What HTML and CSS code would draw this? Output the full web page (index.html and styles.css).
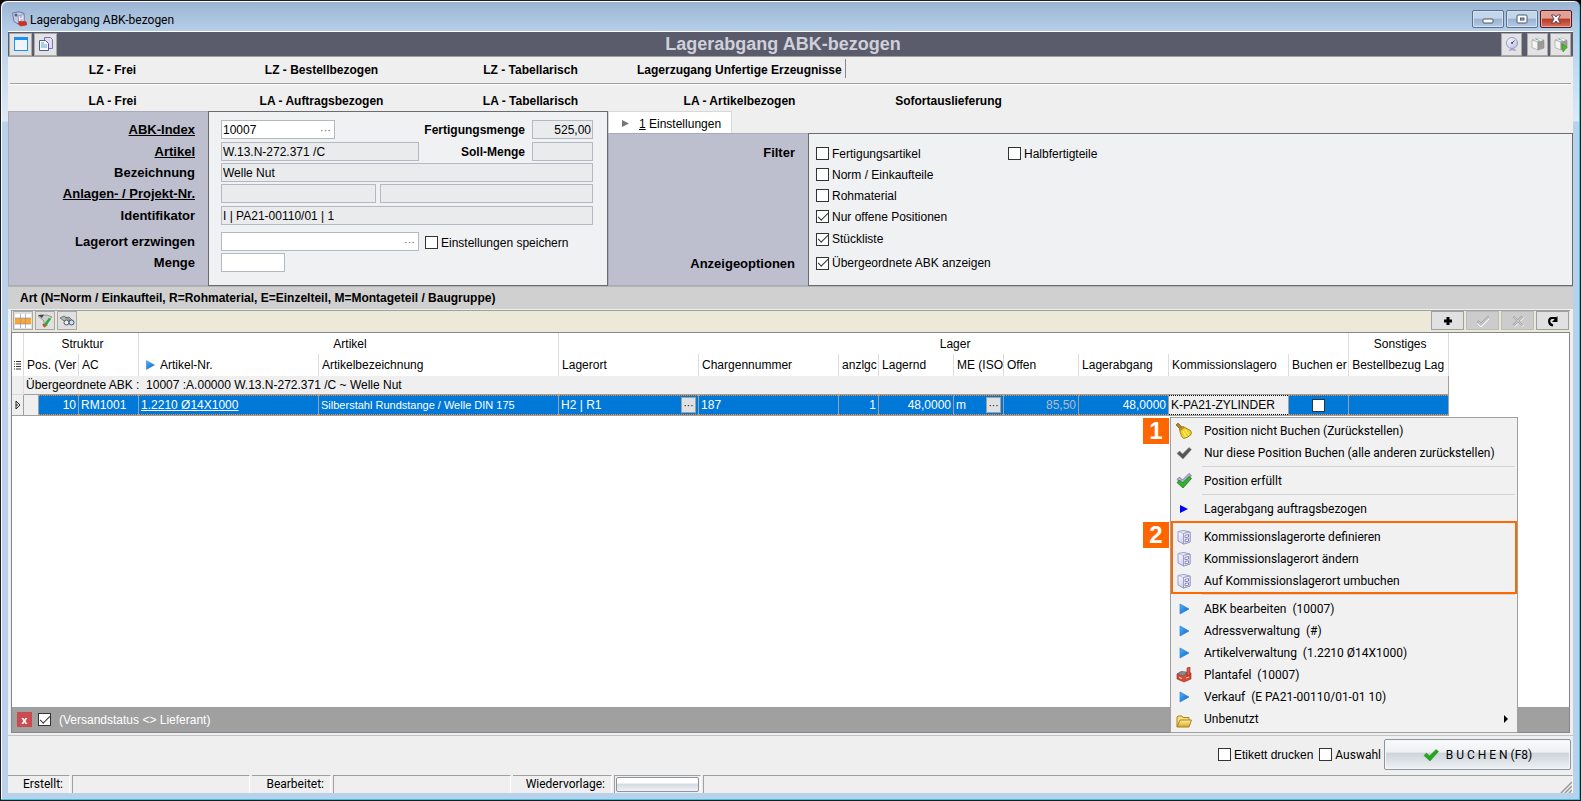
FILE: index.html
```html
<!DOCTYPE html>
<html lang="de">
<head>
<meta charset="utf-8">
<title>Lagerabgang ABK-bezogen</title>
<link rel="stylesheet" href="styles.css">
</head>
<body>
<svg class="defs" aria-hidden="true">
  <defs>
    <linearGradient id="gBlue" x1="0" y1="0" x2="1" y2="1"><stop offset="0" stop-color="#4db4ff"/><stop offset="1" stop-color="#0060d0"/></linearGradient>
    <linearGradient id="gGold" x1="0" y1="0" x2="0" y2="1"><stop offset="0" stop-color="#fff0a0"/><stop offset="1" stop-color="#d9a520"/></linearGradient>
    <linearGradient id="gLilac" x1="0" y1="0" x2="1" y2="1"><stop offset="0" stop-color="#ffffff"/><stop offset="1" stop-color="#b9b9e4"/></linearGradient>
    <symbol id="i-play" viewBox="0 0 16 16"><path d="M4 3l9 5-9 5z" fill="url(#gBlue)" stroke="#3a7fc4" stroke-width=".7"/></symbol>
    <symbol id="i-cabinet" viewBox="0 0 16 16"><path d="M2 2.500l6-1 6 1.500v10l-6.500 2-5.500-3z" fill="url(#gLilac)" stroke="#9a9acc" stroke-linejoin="round"/><path d="M2 2.500l5.500 2L14 3" fill="none" stroke="#b4b4dc" stroke-width=".8"/><path d="M7.500 4.500L14 3v10l-6.500 2z" fill="#f6f6ff" stroke="#8c8cc4" stroke-width=".8"/><path d="M9 6.300l3.500-.8v2.500L9 8.800zM9 10.500l3.500-.8v2.500L9 13z" fill="#fff" stroke="#7676b4" stroke-width=".9"/></symbol>
    <symbol id="i-check" viewBox="0 0 16 16"><path d="M1 8.500L3.500 6l3 3L13 2.500 15.500 4.500 7 14z" stroke-linejoin="round"/></symbol>
    <symbol id="i-cube" viewBox="0 0 16 16"><path d="M2 4l6-2 6 2-5 2z" fill="#fff" stroke="#aaa" stroke-width=".6"/><path d="M2 4l6 2v8l-6-2.500z" fill="#f4f4f0" stroke="#999" stroke-width=".6"/><path d="M8 6l6-1.500V12l-6 2z" fill="#9c9c98" stroke="#888" stroke-width=".6"/><path d="M5.500 3l4 1.500" stroke="#5ab0a0"/></symbol>
  </defs>
</svg>
<div class="window">
  <header class="titlebar">
    <svg class="ico16" viewBox="0 0 16 16"><path d="M1.500 2L8 .8l5 1.500V10l-5 3.500-5-3z" fill="#c5c9e4" stroke="#7078a8"/><path d="M7 5l6-1.500V11l-5 2z" fill="#eef" stroke="#7078a8" stroke-width=".7"/><circle cx="5" cy="4" r="1.500" fill="#555a88"/><path d="M9 6h2M9.500 9h2" stroke="#7078a8"/><path d="M8 10.500h6.500l1 1v2.500l-6 1L7.500 13z" fill="#d83018" stroke="#a01808" stroke-width=".5"/></svg>
    <h1>Lagerabgang ABK-bezogen</h1>
    <div class="caption">
      <button aria-label="Minimieren"><svg viewBox="0 0 14 12"><rect x="2" y="6" width="10" height="4" rx="1" fill="#fff" stroke="#4d586c"/></svg></button>
      <button aria-label="Maximieren"><svg viewBox="0 0 14 12"><rect x="2" y="2" width="10" height="8" rx="1" fill="#fff" stroke="#4d586c"/><rect x="5.500" y="5" width="3.500" height="2" fill="#a8c0dc" stroke="#4d586c"/></svg></button>
      <button class="close" aria-label="Schließen"><svg viewBox="0 0 14 12"><path d="M2.500 2h3L7 4l1.500-2h3L9 6l2.500 4h-3L7 8l-1.500 2h-3L5 6z" fill="#fff" stroke="#5c3440" stroke-width=".9"/></svg></button>
    </div>
  </header>

  <main class="client">
    <div class="toolbar">
      <button class="tool" aria-label="Fenster"><svg viewBox="0 0 16 16"><rect x="1.500" y="1.500" width="13" height="13" fill="#f0f2fc" stroke="#1c90f0"/><path d="M1 3h14" stroke="#1c90f0" stroke-width="2"/></svg></button>
      <button class="tool" aria-label="Kopieren"><svg viewBox="0 0 16 16"><path d="M6.500 1.500h6l2 2v9h-8z" fill="#e4dcf4" stroke="#8070b0"/><path d="M1.500 4.500h6l3 3v7h-9z" fill="#f4f8ff" stroke="#4c5c94"/><path d="M3 9h6M3 11h6M3 7h3" stroke="#6ca0c8"/></svg></button>
      <h2>Lagerabgang ABK-bezogen</h2>
      <button class="tool slim apart" aria-label="Suche"><svg viewBox="0 0 16 16"><circle cx="8" cy="7" r="5.500" fill="url(#gLilac)" stroke="#9898cc"/><path d="M8 7l2.500-2.500" stroke="#556"/><circle cx="8" cy="7" r="1" fill="#445"/><path d="M5 14.500q3.500-3 7 0" fill="#b8b8e0" stroke="#9898cc"/></svg></button>
      <button class="tool slim" aria-label="Lager"><svg><use href="#i-cube"/></svg></button>
      <button class="tool slim" aria-label="Lager buchen"><svg viewBox="0 0 16 16"><use href="#i-cube"/><path d="M9 8l5 3-4 5z" fill="#48c020" stroke="#2a8a10" stroke-width=".6"/></svg></button>
    </div>

    <nav class="tabs">
      <div class="tabrow">
        <button>LZ - Frei</button><button>LZ - Bestellbezogen</button><button>LZ - Tabellarisch</button><button class="ruled">Lagerzugang Unfertige Erzeugnisse</button>
      </div>
      <div class="tabrow second">
        <button>LA - Frei</button><button>LA - Auftragsbezogen</button><button>LA - Tabellarisch</button><button>LA - Artikelbezogen</button><button>Sofortauslieferung</button>
      </div>
    </nav>

    <div class="form">
      <div class="labels rows">
        <label class="u" for="abk">ABK-Index</label>
        <label class="u" for="art">Artikel</label>
        <label for="bez">Bezeichnung</label>
        <label class="u" for="anl">Anlagen- / Projekt-Nr.</label>
        <label for="ident">Identifikator</label>
        <label for="lag">Lagerort erzwingen</label>
        <label for="menge">Menge</label>
      </div>
      <div class="fields rows">
        <div class="line"><span class="pick w114"><input id="abk" value="10007"><button aria-label="Auswählen">···</button></span><label class="b end" for="fm">Fertigungsmenge</label><input class="num" id="fm" value="525,00" readonly></div>
        <div class="line"><input class="w198" id="art" value="W.13.N-272.371 /C" readonly><label class="b end" for="sm">Soll-Menge</label><input class="num" id="sm" readonly></div>
        <div class="line"><input class="grow" id="bez" value="Welle Nut" readonly></div>
        <div class="line tight"><input class="w155" id="anl" readonly><input class="grow" aria-label="Projekt-Nr." readonly></div>
        <div class="line"><input class="grow" id="ident" value="I | PA21-00110/01 | 1" readonly></div>
        <div class="line"><span class="pick w198"><input id="lag"><button aria-label="Auswählen">···</button></span><label class="check set"><input type="checkbox">Einstellungen speichern</label></div>
        <div class="line"><input class="w64" id="menge"></div>
      </div>
      <div class="settings">
        <button class="tab"><svg viewBox="0 0 8 8"><path d="M0 0l8 4-8 4z" fill="#777"/></svg><span><u>1</u> Einstellungen</span></button>
        <div class="options">
          <div class="labels opt"><span>Filter</span><span>Anzeigeoptionen</span></div>
          <div class="checks">
            <label class="check"><input type="checkbox">Fertigungsartikel</label>
            <label class="check"><input type="checkbox">Halbfertigteile</label>
            <label class="check wide"><input type="checkbox">Norm / Einkaufteile</label>
            <label class="check wide"><input type="checkbox">Rohmaterial</label>
            <label class="check wide"><input type="checkbox" checked>Nur offene Positionen</label>
            <label class="check wide"><input type="checkbox" checked>Stückliste</label>
            <label class="check wide"><input type="checkbox" checked>Übergeordnete ABK anzeigen</label>
          </div>
        </div>
      </div>
    </div>

    <h3 class="legend">Art (N=Norm / Einkaufteil, R=Rohmaterial, E=Einzelteil, M=Montageteil / Baugruppe)</h3>

    <section class="gridpane">
      <div class="gridbar">
        <button class="mini" aria-label="Tabelle"><svg viewBox="0 0 16 14"><path fill="#fff" d="M0 0h16v14H0z"/><path fill="#ffa726" d="M0 4h16v6H0z"/><path d="M5.500 0v14M10.500 0v14M0 4h16M0 10h16" stroke="#8f8fc8" stroke-width=".7"/></svg></button>
        <button class="mini" aria-label="Filter"><svg viewBox="0 0 16 14"><path d="M1 2l9-1 5 2-5 4v5l-3-2V7z" fill="#d0d0d0" stroke="#888" stroke-width=".8"/><path d="M1 1l6-.5L5 4z" fill="#444"/><path d="M7 12.500l6-8" stroke="#26b02c" stroke-width="2.500"/><path d="M6 10l2 3" stroke="#e04030" stroke-width="2"/></svg></button>
        <button class="mini" aria-label="Suchen"><svg viewBox="0 0 16 14"><path d="M1 4l4-2 6 4-3 3zM6 4l4-1 4 4" fill="#aeb4b8" stroke="#666" stroke-width=".8"/><circle cx="7.500" cy="8.500" r="2.500" fill="#e8f0f8" stroke="#555"/><circle cx="12.500" cy="8.500" r="2.500" fill="#cfe0f0" stroke="#456"/></svg></button>
        <span class="gap"></span>
        <button class="nav" aria-label="Neu"><svg viewBox="0 0 12 12"><path d="M6 2v8M2 6h8" stroke="#000" stroke-width="3"/></svg></button>
        <button class="nav off" aria-label="Speichern" disabled><svg viewBox="0 0 12 12"><path d="M1 8l3 3 8-8" stroke="#fff" stroke-width="2" fill="none"/><path d="M0 7l1.500-1.500L4 8l7-7 1 1.500-8 8z" fill="#c8c8c8" stroke="#999" stroke-width=".7"/></svg></button>
        <button class="nav off" aria-label="Verwerfen" disabled><svg viewBox="0 0 12 12"><path d="M2 2l9 9M11 2l-9 9" stroke="#fff" stroke-width="3"/><path d="M1.500 1.500l9 9M10.500 1.500l-9 9" stroke="#999" stroke-width="2.500"/><path d="M1.500 1.500l9 9M10.500 1.500l-9 9" stroke="#ccc" stroke-width="1.200"/></svg></button>
        <button class="nav" aria-label="Aktualisieren"><svg viewBox="0 0 12 12"><path d="M6 10.500C1 9.500 1 3 5 3h4" fill="none" stroke="#000" stroke-width="2.200"/><path d="M10.500 1v6H5z" fill="#000"/></svg></button>
      </div>
      <div class="gridbody">
        <table>
          <colgroup><col class="c12"><col class="c15"><col class="c40"><col class="c60"><col class="c180"><col class="c240"><col class="c140"><col class="c140"><col class="c40"><col class="c75"><col class="c50"><col class="c75"><col class="c90"><col class="c120"><col class="c60"><col class="c100"></colgroup>
          <thead>
            <tr class="bands"><th></th><th colspan="3">Struktur</th><th colspan="2">Artikel</th><th colspan="9">Lager</th><th>Sonstiges</th></tr>
            <tr class="cols"><th class="mark"><svg viewBox="0 0 8 10"><path d="M2 1.500h5M2 4h5M2 6.500h5M2 9h5M0 1.500h1M0 4h1M0 6.500h1M0 9h1" stroke="#333"/></svg></th><th colspan="2">Pos. (Ver</th><th>AC</th><th><svg class="sort"><use href="#i-play"/></svg>Artikel-Nr.</th><th>Artikelbezeichnung</th><th>Lagerort</th><th>Chargennummer</th><th>anzlgc</th><th>Lagernd</th><th>ME (ISO</th><th>Offen</th><th>Lagerabgang</th><th>Kommissionslagero</th><th>Buchen er</th><th>Bestellbezug Lag</th></tr>
          </thead>
          <tbody>
            <tr class="group"><td></td><td colspan="15">Übergeordnete ABK :&nbsp; 10007 :A.00000 W.13.N-272.371 /C ~ Welle Nut</td></tr>
            <tr class="sel"><td class="plain mark"><svg viewBox="0 0 8 10"><path d="M2 1l4 4-4 4z" fill="none" stroke="#222"/><path d="M2 5h2" stroke="#222"/></svg></td><td class="plain"></td><td class="r">10</td><td>RM1001</td><td><a href="#">1.2210 Ø14X1000</a></td><td class="small">Silberstahl Rundstange / Welle DIN 175</td><td><div class="cell">H2 | R1<button aria-label="Lagerort wählen">···</button></div></td><td>187</td><td class="r">1</td><td class="r">48,0000</td><td><div class="cell">m<button aria-label="Einheit wählen">···</button></div></td><td class="r dim">85,50</td><td class="r">48,0000</td><td class="focus">K-PA21-ZYLINDER</td><td class="c"><input type="checkbox" aria-label="Buchen"></td><td></td></tr>
          </tbody>
        </table>
        <div class="filterbar">
          <button class="kill" aria-label="Filter entfernen">x</button>
          <label class="check"><input type="checkbox" checked><span>(Versandstatus &lt;&gt; Lieferant)</span></label>
        </div>
      </div>
    </section>

    <div class="actions">
      <label class="check"><input type="checkbox">Etikett drucken</label>
      <label class="check ui"><input type="checkbox">Auswahl</label>
      <button class="book"><svg viewBox="0 0 16 16"><use href="#i-check" fill="#22a81c" stroke="#1c8818" stroke-width=".5"/></svg>B U C H E N (F8)</button>
    </div>

    <footer class="status">
      <span class="s62">Erstellt:</span><span class="s178"></span><span class="s80">Bearbeitet:</span><span class="s178"></span><span class="s100">Wiedervorlage:</span><span class="s88"><button aria-label="Wiedervorlage"></button></span><span class="rest"><svg viewBox="0 0 12 12"><path d="M1 12L12 1M5 12l7-7M9 12l3-3" stroke="#999" stroke-width="1.500"/></svg></span>
    </footer>
  </main>

  <div class="menu" role="menu">
    <button role="menuitem"><svg viewBox="0 0 16 16"><path d="M0 2l2-2 4 4-2 2z" fill="#b08030" stroke="#6a4a10" stroke-width=".6"/><path d="M3.500 6L7 3.500l7.500 4q1.500 2 .5 4-3 3.500-7.500 4Q5 14 3.500 6z" fill="#f0d020" stroke="#8a7000" stroke-width=".8"/><path d="M3.500 6L7 3.500l2 1-5 4z" fill="#c09020"/><path d="M7 8l3 6M9 7l4 5" stroke="#fff8a0"/></svg>Position nicht Buchen (Zurückstellen)</button>
    <button role="menuitem"><svg viewBox="0 0 16 16"><use href="#i-check" fill="#555" stroke="#888" stroke-width=".6"/></svg>Nur diese Position Buchen (alle anderen zurückstellen)</button>
    <hr>
    <button role="menuitem"><svg viewBox="0 0 16 16"><use href="#i-check" y="-2" fill="#aab4dc" stroke="#667" stroke-width=".7"/><use href="#i-check" y="1" fill="#30b428" stroke="#1a6a18" stroke-width=".7"/></svg>Position erfüllt</button>
    <hr>
    <button role="menuitem"><svg viewBox="0 0 16 16"><path d="M4 4l8 4-8 4z" fill="#0000ff"/></svg>Lagerabgang auftragsbezogen</button>
    <hr class="none">
    <div class="marked">
      <button role="menuitem"><svg><use href="#i-cabinet"/></svg>Kommissionslagerorte definieren</button>
      <button role="menuitem"><svg><use href="#i-cabinet"/></svg>Kommissionslagerort ändern</button>
      <button role="menuitem"><svg><use href="#i-cabinet"/></svg>Auf Kommissionslagerort umbuchen</button>
      <span class="badge two">2</span>
    </div>
    <hr>
    <button role="menuitem"><svg><use href="#i-play"/></svg>ABK bearbeiten&nbsp; (10007)</button>
    <button role="menuitem"><svg><use href="#i-play"/></svg>Adressverwaltung&nbsp; (#)</button>
    <button role="menuitem"><svg><use href="#i-play"/></svg>Artikelverwaltung&nbsp; (1.2210 Ø14X1000)</button>
    <button role="menuitem"><svg viewBox="0 0 16 16"><path d="M1 7l4-2 10 1v6l-7 3-7-3z" fill="#d84a34" stroke="#8a2c1c" stroke-width=".6"/><path d="M1 7l4-2.500 6 .5-3 4z" fill="#8a8a90" stroke="#555" stroke-width=".5"/><path d="M11 1l3-1v8l-3 1z" fill="#e05840" stroke="#8a2c1c" stroke-width=".6"/><path d="M3 10.500l3 1M10 11l3-1" stroke="#ffd0c0"/></svg>Plantafel&nbsp; (10007)</button>
    <button role="menuitem"><svg><use href="#i-play"/></svg>Verkauf&nbsp; (E PA21-00110/01-01 10)</button>
    <button role="menuitem"><svg class="low" viewBox="0 0 16 16"><path d="M1 14V4l1-1h4l1 1.500h6V7" fill="#f8e080" stroke="#a8821c"/><path d="M1 14l3-7h11.500L13 14z" fill="url(#gGold)" stroke="#a8821c"/></svg>Unbenutzt<svg class="sub" viewBox="0 0 4 8"><path d="M0 0l4 4-4 4z"/></svg></button>
    <span class="badge">1</span>
  </div>
</div>
</body>
</html>
```

FILE: styles.css
```css
* { box-sizing: border-box; }

body {
  margin: 0;
  background: #000;
  color: #000;
  font: 12px/16px "Liberation Sans", Arial, sans-serif;
}

button, input { font: inherit; color: inherit; }
button { margin: 0; padding: 0; border: 0; background: none; }
h1, h2, h3 { margin: 0; font-size: 12px; }
.defs { position: absolute; width: 0; height: 0; }

/* Window frame */
.window {
  position: relative;
  display: flex;
  flex-direction: column;
  min-height: 100vh;
  padding: 0 7px 7px;
  border: 1px solid #1c1c24;
  border-radius: 7px 7px 0 0;
  box-shadow: inset -1px -1px #3cc4dc, inset 1px 1px #fff;
  background: linear-gradient(#9ab3d1 0, #b6cfe9 30px, #dfe9f5 120px, #b9d1ea 121px);
}

.titlebar {
  display: flex;
  align-items: center;
  gap: 3px;
  height: 30px;
  padding: 6px 1px 0 3px;
}
.ico16 { width: 16px; height: 16px; }
.titlebar h1 { flex: 1; padding-top: 2px; font: 12px/18px Roboto, sans-serif; }
.caption { display: flex; gap: 2px; }
.caption button {
  width: 32px;
  height: 18px;
  border: 1px solid #5d718c;
  border-radius: 2px;
  box-shadow: inset 0 0 0 1px #d2e2f3;
  background: linear-gradient(#c3d6ea 45%, #98b2d0 50%, #b4cbe4);
}
.caption .close {
  border-color: #53141c;
  box-shadow: inset 0 0 0 1px #e6aca4;
  background: linear-gradient(#e0a197 45%, #b83824 50%, #d0705c);
}
.caption svg { display: block; width: 14px; height: 12px; margin: auto; }

.client {
  display: flex;
  flex-direction: column;
  flex: 1;
  border-top: 1px solid #fff;
  background: #efefef;
}

/* Module toolbar */
.toolbar {
  display: flex;
  align-items: center;
  gap: 2px;
  height: 25px;
  padding: 0 2px 0 1px;
  border-bottom: 1px solid #a0a0a0;
  background: #5a5c6c;
}
.toolbar h2 {
  flex: 1;
  padding-left: 8px;
  color: #cfd0da;
  font-size: 18px;
  line-height: 24px;
  text-align: center;
}
.tool { width: 23px; height: 23px; border: 1px solid #a8a8a8; background: #e3e3e3; }
.slim { width: 21px; }
.tool svg { display: block; width: 16px; height: 16px; margin: auto; }
.apart { margin-right: 3px; }

/* Module tabs */
.tabrow {
  display: grid;
  grid-template-columns: repeat(5, 209px);
  height: 26px;
}
.tabrow button { font-weight: bold; white-space: nowrap; }
.tabrow .ruled {
  margin: 2px -2px 5px 0;
  padding: 3px 0 0 2px;
  border-right: 1px solid #888;
  text-align: left;
}
.tabrow.second {
  height: 28px;
  margin: 0 2px;
  padding-top: 6px;
  border-top: 1px solid #a0a0a0;
  box-shadow: inset 0 1px #fff;
}
.second button { padding-right: 4px; }

/* Form */
.form { display: grid; grid-template-columns: 200px 400px 1fr; min-height: 175px; }
.rows {
  display: grid;
  grid-template-rows: 22px 21px 21px 22px 26px 21px 19px;
  align-items: start;
  padding-top: 8px;
}
.labels {
  border: 1px solid #a9aabb;
  border-right: 0;
  background: #bdbfcf;
  font-size: 13px;
  font-weight: bold;
  line-height: 19px;
  text-align: right;
  padding-right: 13px;
}
.u { text-decoration: underline; }
.fields { border: 1px solid #6c6c70; padding-left: 12px; padding-right: 14px; background: #f0f1f3; }
.line { display: flex; align-items: center; gap: 7px; height: 19px; }
.tight { gap: 4px; }
.line input:not([type=checkbox]) {
  min-width: 0;
  height: 19px;
  padding: 0 1px;
  border: 1px solid #b4b8c0;
  border-radius: 0;
  background: #fff;
  outline: 0;
}
.line input[readonly]:not([type=checkbox]) { background: #eaebed; }
.line .num { width: 61px; text-align: right; }
.grow { flex: 1; }
.w64 { width: 64px; }
.w114 { width: 114px; }
.w155 { width: 155px; }
.w198 { width: 198px; }
.b { font-weight: bold; }
.end { margin-left: auto; }
.pick { display: flex; border: 1px solid #b4b8c0; background: #fff; height: 19px; }
.line .pick input:not([type=checkbox]) { flex: 1; width: 0; height: 17px; border: 0; }
.pick button { width: 17px; color: #666; line-height: 16px; font-size: 11px; }

.check { display: inline-flex; align-items: center; gap: 3px; white-space: nowrap; }
.set { margin-left: -1px; padding-top: 2px; }
input[type=checkbox] {
  appearance: none;
  display: grid;
  place-items: center;
  width: 13px;
  height: 13px;
  margin: 0;
  border: 1px solid #333;
  background: #fff;
}
input[type=checkbox]:checked::after {
  content: "";
  width: 9px;
  height: 4px;
  margin-bottom: 3px;
  border: solid #333;
  border-width: 0 0 1px 1px;
  transform: rotate(-45deg);
}

.settings { display: flex; flex-direction: column; align-items: flex-start; }
.tab {
  display: flex;
  align-items: center;
  gap: 10px;
  height: 22px;
  padding: 2px 10px 0 13px;
  border: 1px solid #d8d8d8;
  border-bottom: 0;
  background: #fff;
}
.tab svg { width: 7px; height: 7px; }
.options { display: grid; grid-template-columns: 200px 1fr; flex: 1; align-self: stretch; }
.opt { display: flex; flex-direction: column; justify-content: space-between; padding-top: 9px; padding-bottom: 12px; }
.checks {
  display: grid;
  grid-template-columns: 192px 1fr;
  grid-template-rows: 21px 21px 21px 21px 24px 24px;
  align-content: start;
  padding: 9px 7px 0;
  border: 1px solid #6c6c70;
  background: #f0f1f3;
}
.wide { grid-column: 1 / -1; }

.legend {
  padding: 3px 12px;
  border-top: 1px solid #b4b4b4;
  background: #d0d0d0;
  line-height: 16px;
}

/* Data grid */
.gridpane {
  display: flex;
  flex-direction: column;
  flex: 1;
  padding: 1px 3px 2px;
  border-bottom: 1px solid #c4c4c4;
}
.gridbar {
  display: flex;
  align-items: flex-start;
  gap: 2px;
  height: 22px;
  padding: 0 1px;
  border: solid #a0a0a0;
  border-width: 1px 0 0 1px;
  background: #ece9d8;
}
.gap { flex: 1; }
.mini { width: 20px; height: 19px; border: 1px solid #a8a8a8; background: #e0e0e0; }
.nav { width: 33px; height: 19px; border: 1px solid #a0a0a0; background: #e1e1e1; }
.off { border-color: #bbb; background: #ccc; }
.mini svg { display: block; width: 16px; height: 14px; margin: auto; }
.nav svg { display: block; width: 12px; height: 12px; margin: auto; }
.gridbody {
  display: flex;
  flex-direction: column;
  justify-content: space-between;
  flex: 1;
  border: 1px solid #85858f;
  background: #fff;
}

table { width: 1437px; table-layout: fixed; border-collapse: separate; border-spacing: 0; }
.c12 { width: 12px; } .c15 { width: 15px; } .c40 { width: 40px; } .c50 { width: 50px; }
.c60 { width: 60px; } .c75 { width: 75px; } .c90 { width: 90px; } .c100 { width: 100px; }
.c120 { width: 120px; } .c140 { width: 140px; } .c180 { width: 180px; } .c240 { width: 240px; }
th, td { overflow: hidden; padding: 0 2px; white-space: nowrap; text-align: left; font-weight: normal; }
th { height: 21px; padding: 0 0 0 3px; border-right: 1px solid #dcdcdc; text-overflow: clip; }
.cols th { height: 22px; }
.bands th { text-align: center; }
.mark { padding: 0 !important; }
.mark svg { display: block; width: 8px; height: 10px; margin: auto; }
.sort { width: 14px; height: 14px; margin: 0 3px 0 1px; vertical-align: -3px; }
.group td { height: 19px; border-bottom: 1px solid #a0a0a0; background: #efefef; }
.group td:first-child { border-right: 1px solid #dcdcdc; border-bottom-color: #dcdcdc; }
.group td:last-child { border-right: 1px solid #a0a0a0; }
.sel td {
  height: 21px;
  border-right: 1px solid #a0a0a0;
  border-bottom: 1px solid #a0a0a0;
  background:
    repeating-linear-gradient(90deg, #ff8c28 0 1px, transparent 1px 2px) top / 100% 1px no-repeat,
    repeating-linear-gradient(90deg, #ff8c28 0 1px, transparent 1px 2px) bottom / 100% 1px no-repeat,
    #0078d7;
  color: #fff;
}
.sel td.plain { background: #efefef; }
.sel td.focus {
  background:
    repeating-linear-gradient(90deg, #000 0 1px, transparent 1px 2px) top / 100% 1px no-repeat,
    repeating-linear-gradient(90deg, #000 0 1px, transparent 1px 2px) bottom / 100% 1px no-repeat,
    #efefef;
  color: #000;
}
.sel a { color: #fff; }
.r { text-align: right; }
.c input { margin: auto; }
.sel .dim { color: #b4bcc8; }
.small { font-size: 11px; }
.cell { display: flex; align-items: center; justify-content: space-between; }
.cell button { width: 15px; height: 16px; border: 1px solid #a0a0a0; background: #e1e1e1; color: #000; font-size: 10px; line-height: 13px; }

.filterbar { display: flex; align-items: center; gap: 6px; height: 25px; padding-left: 5px; background: #a0a0a0; color: #fff; }
.filterbar .check { gap: 8px; }
.kill { width: 15px; height: 15px; background: #c84c50; font: bold 10px/14px "Open Sans", sans-serif; }

/* Bottom action row */
.actions {
  display: flex;
  align-items: center;
  justify-content: flex-end;
  gap: 6px;
  height: 39px;
  padding: 0 2px 2px 0;
}
.ui { font: 12px/16px Roboto, sans-serif; }
.book {
  display: flex;
  align-items: center;
  justify-content: center;
  gap: 7px;
  width: 187px;
  height: 31px;
  margin-left: -3px;
  border: 1px solid #8c94a0;
  border-radius: 2px;
  box-shadow: inset 0 0 0 1px #f4f6f8;
  background: linear-gradient(#fafbfc 0, #eef0f3 42%, #cdd3da 45%, #eef2f5);
  font: 12px/16px Roboto, sans-serif;
}
.book svg { width: 16px; height: 16px; }

.status { display: flex; gap: 2px; height: 18px; font: 12px/16px Roboto, sans-serif; }
.status span { padding-right: 6px; border-top: 1px solid #a0a0a0; border-right: 1px solid #fff; text-align: right; white-space: nowrap; }
.status span:nth-child(even), .status .rest { border-left: 1px solid #a0a0a0; }
.s62 { width: 62px; } .s178 { width: 178px; } .s80 { width: 79px; } .s100 { width: 99px; }
.status .s88 { width: 87px; padding: 1px; }
.s88 button { display: block; width: 100%; height: 15px; border: 1px solid #8c94a0; border-radius: 2px; background: linear-gradient(#fff 40%, #d4d9e0 45%, #f0f3f6); }
.status .rest { flex: 1; padding: 0; }
.rest svg { float: right; width: 12px; height: 12px; margin-top: 5px; }

/* Context menu */
.menu {
  position: absolute;
  left: 1169px;
  top: 416px;
  display: flex;
  flex-direction: column;
  width: 348px;
  padding: 2px 0;
  border: 1px solid #a0a0a0;
  background: #f1f1f1;
  font: 12px/22px Roboto, sans-serif;
}
.menu button { display: flex; align-items: center; gap: 12px; width: 100%; height: 22px; padding-left: 5px; }
.menu button svg { width: 16px; height: 16px; }
.menu button .low { margin-top: 4px; }
.menu button .sub { width: 4px; height: 8px; margin: 0 9px 0 auto; }
.menu hr { height: 1px; margin: 2px 2px 3px 31px; border: 0; background: #d4d4d4; }
.menu hr.none { background: none; }
.marked { position: relative; }
.marked::before {
  content: "";
  position: absolute;
  inset: -5px 0 -2px;
  border: 2px solid #ff6a00;
  pointer-events: none;
}
.badge {
  position: absolute;
  top: 0;
  right: 100%;
  width: 26px;
  height: 26px;
  margin-right: 2px;
  background: #ff6600;
  color: #fff;
  font: bold 24px/26px "Liberation Sans", Arial, sans-serif;
  text-align: center;
}
.two { top: -4px; }
```
